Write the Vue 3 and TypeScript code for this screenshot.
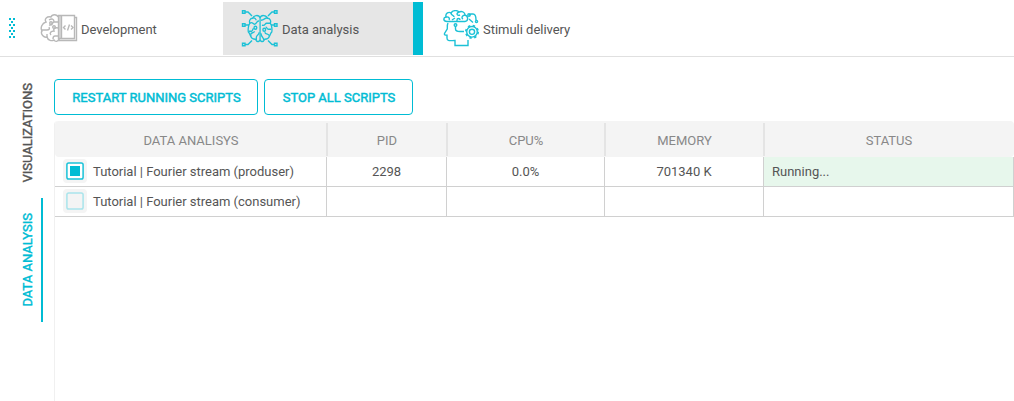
<script setup lang="ts">
interface Row { name: string; checked: boolean; pid: string; cpu: string; memory: string; status: string }

const headers: string[] = ['DATA ANALISYS', 'PID', 'CPU%', 'MEMORY', 'STATUS']
const rows: Row[] = [
  { name: 'Tutorial | Fourier stream (produser)', checked: true, pid: '2298', cpu: '0.0%', memory: '701340 K', status: 'Running...' },
  { name: 'Tutorial | Fourier stream (consumer)', checked: false, pid: '', cpu: '', memory: '', status: '' },
]
const dots: [number, number][] = [
  [0, 0], [4, 0], [2, 3], [0, 6], [4, 6], [2, 9], [0, 12], [4, 12], [2, 15], [0, 18], [4, 18],
]
</script>

<template>
  <div class="app">
    <header class="toolbar">
      <svg class="handle" width="6" height="20" viewBox="0 0 6 20" shape-rendering="crispEdges">
        <rect v-for="([x, y], i) in dots" :key="i" :x="x" :y="y" width="2" height="2" />
      </svg>
      <div class="tab dev">
        <svg class="icon gray" width="38" height="38" viewBox="0 0 38 38">
          <path d="M18 7C17 4 12 4 11 7C7 6 4 9 6 12C2 13 0 18 2 21C0 24 4 28 7 27C8 31 12 31 14 30C15 32 18 32 19 29" />
          <path d="M9 10C12 8 14 9 14 12M18 12H14C12 12 13 16 9 15M2 20H7C9 20 10 19 9 17M18 18C15 17 13 19 14 21C11 21 9 23 11 25M18 26H15C13 26 13 28 13 29M7 27V24" />
          <circle cx="11" cy="13" r="1.3" /><circle cx="14" cy="17" r="1.3" />
          <path d="M20 6V28" stroke="#d6d6d6" stroke-width="3" />
          <path d="M18.500 5.500H34.500V28.500H18.500zM21.500 6V28M34.500 7.500H36.500V30.500H19V28" />
          <path d="M25.500 15.500L23.500 17.500L25.500 19.500M31 15.500L33 17.500L31 19.500M29.500 14.500L27.500 20.500" />
        </svg>
        <span>Development</span>
      </div>
      <div class="tab data">
        <svg class="icon" width="38" height="38" viewBox="0 0 38 38">
          <g transform="translate(1.400 -.8) scale(.93 1)">
            <path d="M19 9C18 5 12 6 11 9C8 9 7 12 8 14C6 16 6 22 6.500 23C8 24 8 26 9 27C10 30 13 30 14 30C16 34 19 32 19 30V9C20 5 26 6 27 9C30 9 31 12 30 14C32 16 32 22 31.500 23C30 24 30 26 29 27C28 30 25 30 24 30C22 34 19 32 19 30" />
            <path d="M11 9C13 8 14 9 15 11M8 14C11 12 11 15 13 15C16 15 15 11 18 12M7 22H10C11 22 11 20 12 19M9 27V25C9 23 13 24 13 22M15 31V28C15 26 18 26 18 23M27 9C24 8 24 11 20 11M30 14H26C24 14 25 17 21 16M31 20H28C26 20 27 18 25 18M29 27C29 24 25 26 24 23M23 31C23 28 20 28 20 24" />
            <circle cx="14" cy="18.500" r="1.500" /><circle cx="23.500" cy="20.500" r="1.500" />
          </g>
          <path d="M4 2H7L11 6M4 34.500H7L11 30.500M4 15H8M34 2H31L27 6M34 34.500H31L27 30.500M34 15H30" />
          <path d="M1.500 .8H4V3.300H1.500zM1.500 13.700H4V16.200H1.500zM1.500 33.200H4V35.700H1.500zM33.500 .8H36V3.300H33.500zM33.500 13.700H36V16.200H33.500zM33.500 33.200H36V35.700H33.500z" />
        </svg>
        <span>Data analysis</span>
      </div>
      <div class="tab stim">
        <svg class="icon" width="38" height="38" viewBox="0 0 38 38">
          <path d="M5 11.500C1 11.500 1 7.500 4 7C3 3 7 1.500 9 3C11 0 15 0 17 2C20 .5 23 2.500 23 5C27 6.500 26 11.500 23 11.500z" />
          <path d="M4 7C7 6.500 8 8.500 7 10M9 3C9 6 12 5 12 7M10 10L13 8M17 2C13 4 16 6 18 5M15 11.500V10C15 8 18 8 18 10M23 5C20 5.500 19 8 21 9" />
          <path d="M6 13C4.500 16 6 18 5 19.500L2.500 23.500C2 25 3 25.300 5 25.300V28C5 31.500 8 30.500 13 30.500V35.500H26V30" />
          <path d="M13.500 16V19C13.500 21 16 21.500 18 21.500H22M27 5L29 4H31C33 4 34 6 34 10M27 9L31 12.500" />
          <circle cx="13.500" cy="15" r="1.300" /><circle cx="27" cy="5" r="1.200" /><circle cx="34.500" cy="11.500" r="1.100" />
          <circle cx="30" cy="21.800" r="5.300" /><circle cx="30" cy="21.800" r="2.600" />
          <circle cx="30" cy="21.800" r="6.200" stroke-dasharray="2.400 2.470" stroke-width="1.700" />
        </svg>
        <span>Stimuli delivery</span>
      </div>
    </header>
    <div class="body">
      <nav class="side">
        <div class="side-tab"><span>VISUALIZATIONS</span></div>
        <div class="side-tab active"><span>DATA ANALYSIS</span></div>
      </nav>
      <main class="content">
        <div class="actions">
          <button class="restart">RESTART RUNNING SCRIPTS</button>
          <button class="stop">STOP ALL SCRIPTS</button>
        </div>
        <div class="table">
          <div class="head line">
            <div v-for="h in headers" :key="h" class="th">{{ h }}</div>
          </div>
          <div v-for="r in rows" :key="r.name" class="line row">
            <div class="td name">
              <svg class="box" :class="{ on: r.checked }" width="24" height="24" viewBox="0 0 24 24">
                <rect class="pad" width="24" height="24" rx="4" />
                <rect class="frame" x="3.9" y="3.9" width="16.200" height="16.200" rx="1.800" />
                <rect v-if="r.checked" class="mark" x="7" y="7" width="10" height="10" />
              </svg>
              <span>{{ r.name }}</span>
            </div>
            <div class="td">{{ r.pid }}</div>
            <div class="td">{{ r.cpu }}</div>
            <div class="td">{{ r.memory }}</div>
            <div class="td status" :class="{ running: r.status }">{{ r.status }}</div>
          </div>
        </div>
      </main>
    </div>
  </div>
</template>

<style>
html, body { margin: 0; overflow: hidden; background: #fff; }
</style>

<style scoped>
* { box-sizing: border-box; }
.app { width: 1014px; height: 401px; display: flex; flex-direction: column; font-family: Roboto, "Liberation Sans", sans-serif; font-size: 13px; color: #555; background: #fff; }
.toolbar { height: 57px; flex: none; display: flex; align-items: flex-start; padding-top: 2px; border-bottom: 1px solid #e0e0e0; }
.handle { margin: 16px 0 0 9px; fill: #00bcd4; }
.tab { height: 53px; display: flex; align-items: center; white-space: nowrap; letter-spacing: -.02px; }
.tab span { padding-top: 2px; }
.icon { flex: none; fill: none; stroke: #1cc1d6; stroke-width: 1.4; margin-right: 3px; }
.icon.gray { stroke: #b8b8b8; }
.dev { width: 208px; padding-left: 25px; }
.data { width: 200px; padding-left: 18px; background: #e6e6e6; border-right: 10px solid #00bcd4; }
.stim { padding-left: 19px; }
.body { flex: 1; display: flex; }
.side { width: 43px; margin-right: 11px; display: flex; flex-direction: column; padding-top: 11px; }
.side-tab { height: 130px; display: flex; align-items: center; justify-content: center; -webkit-text-stroke: .4px currentColor; border-right: 2px solid transparent; padding-left: 13px; }
.side-tab span { writing-mode: vertical-rl; transform: rotate(180deg); white-space: nowrap; }
.side-tab.active { height: 124px; color: #00bcd4; border-color: #00bcd4; }
.content { flex: 1; min-width: 0; display: flex; flex-direction: column; padding-top: 22px; }
.actions { display: flex; gap: 6px; margin-bottom: 6px; }
button { height: 36px; padding: 0 0 0 1px; border: 1px solid #00bcd4; border-radius: 4px; background: #fff; color: #00bcd4; font: 400 13px Roboto, sans-serif; -webkit-text-stroke: .45px currentColor; }
.restart { width: 204px; }
.stop { width: 149px; }
.table { flex: 1; border-left: 1px solid #f0f0f0; border-radius: 4px 0 0 0; }
.line { display: grid; grid-template-columns: 272px 120px 158px 159px 250px; }
.head { height: 36px; background: #f4f4f4; border-radius: 4px; padding: 2px 0 1px; color: #888; }
.th { display: flex; align-items: center; justify-content: center; border-left: 2px solid #e4e4e4; margin-left: -1px; padding: 2px 1px 0 0; }
.th:first-child { border-color: transparent; }
.row { height: 30px; }
.td { display: flex; align-items: center; justify-content: center; border-right: 1px solid #d0d0d0; border-bottom: 1px solid #d0d0d0; }
.name { justify-content: flex-start; padding-left: 8px; letter-spacing: -.01px; }
.box { flex: none; margin: 0 6px 1px 0; }
.pad { fill: #f4f4f4; }
.frame { fill: none; stroke: #a9e4eb; stroke-width: 1.5; }
.on .frame { fill: #fff; stroke: #19c2d8; }
.mark { fill: #00bcd4; }
.status { justify-content: flex-start; padding-left: 8px; }
.running { background: #e7f7ec; }
</style>
